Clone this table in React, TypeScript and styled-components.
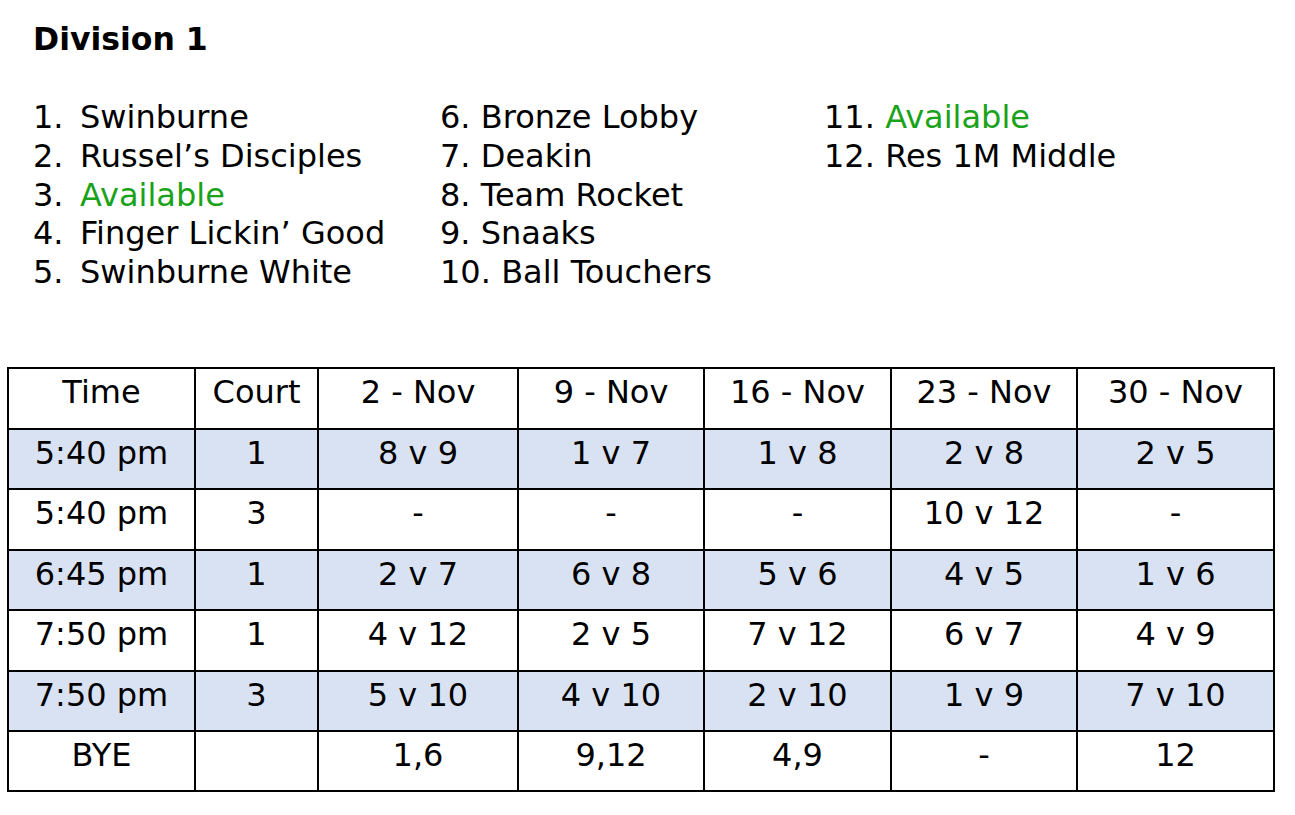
import styled, { createGlobalStyle } from "styled-components"

const GlobalStyle = createGlobalStyle`
    body {
        margin: 0;
        background: #ffffff;
        font-family: "DejaVu Sans", Verdana, sans-serif;
        color: #000000;
    }
`

const Page = styled.div`
    width: 1295px;
    height: 815px;
    padding: 21px 0 0 7px;
    box-sizing: border-box;
`

const Heading = styled.h1`
    margin: 0 0 0 26px;
    font-size: 31.5px;
    font-weight: bold;
    line-height: 37px;
`

const Teams = styled.div`
    display: grid;
    grid-template-columns: 407px 384px auto;
    margin: 40px 0 0 26px;
    font-size: 32px;
    line-height: 38.8px;
`

const TeamColumn = styled.ol`
    list-style: none;
    margin: 0;
    padding: 0;
`

const Team = styled.li<{ $hanging?: boolean }>`
    display: grid;
    grid-template-columns: ${p => (p.$hanging ? "47px auto" : "auto auto")};
    justify-content: start;
    white-space: nowrap;
    & > span:first-child {
        padding-right: ${p => (p.$hanging ? "0" : "0.32em")};
    }
`

const Name = styled.span<{ $open?: boolean }>`
    color: ${p => (p.$open ? "#1aa31a" : "#000000")};
`

const Fixtures = styled.table`
    margin-top: 75px;
    width: 1266px;
    border-collapse: collapse;
    table-layout: fixed;
`

const Row = styled.tr<{ $shaded?: boolean }>`
    background: ${p => (p.$shaded ? "#d9e2f3" : "#ffffff")};
`

const Cell = styled.td<{ $head?: boolean }>`
    border: 2px solid #000000;
    height: ${p => (p.$head ? "61px" : "60.4px")};
    padding: 3px 0 0;
    box-sizing: border-box;
    vertical-align: top;
    text-align: center;
    font-size: 32px;
    line-height: 40px;
    white-space: nowrap;
`

type TeamEntry = { n: number; name: string; open?: boolean }

const columns: TeamEntry[][] = [
    [
        { n: 1, name: "Swinburne" },
        { n: 2, name: "Russel’s Disciples" },
        { n: 3, name: "Available", open: true },
        { n: 4, name: "Finger Lickin’ Good" },
        { n: 5, name: "Swinburne White" },
    ],
    [
        { n: 6, name: "Bronze Lobby" },
        { n: 7, name: "Deakin" },
        { n: 8, name: "Team Rocket" },
        { n: 9, name: "Snaaks" },
        { n: 10, name: "Ball Touchers" },
    ],
    [
        { n: 11, name: "Available", open: true },
        { n: 12, name: "Res 1M Middle" },
    ],
]

const widths = [187, 123, 200, 186, 187, 186, 197]
const header = ["Time", "Court", "2 - Nov", "9 - Nov", "16 - Nov", "23 - Nov", "30 - Nov"]

const rows: string[][] = [
    ["5:40 pm", "1", "8 v 9", "1 v 7", "1 v 8", "2 v 8", "2 v 5"],
    ["5:40 pm", "3", "-", "-", "-", "10 v 12", "-"],
    ["6:45 pm", "1", "2 v 7", "6 v 8", "5 v 6", "4 v 5", "1 v 6"],
    ["7:50 pm", "1", "4 v 12", "2 v 5", "7 v 12", "6 v 7", "4 v 9"],
    ["7:50 pm", "3", "5 v 10", "4 v 10", "2 v 10", "1 v 9", "7 v 10"],
    ["BYE", "", "1,6", "9,12", "4,9", "-", "12"],
]

export default function App() {
    return (
        <Page>
            <GlobalStyle />
            <Heading>Division 1</Heading>
            <Teams>
                {columns.map((col, ci) => (
                    <TeamColumn key={ci}>
                        {col.map(t => (
                            <Team key={t.n} $hanging={ci === 0}>
                                <span>{t.n}.</span>
                                <Name $open={t.open}>{t.name}</Name>
                            </Team>
                        ))}
                    </TeamColumn>
                ))}
            </Teams>
            <Fixtures>
                <colgroup>
                    {widths.map((w, i) => (
                        <col key={i} style={{ width: w }} />
                    ))}
                </colgroup>
                <tbody>
                    <Row>
                        {header.map(h => (
                            <Cell key={h} $head>{h}</Cell>
                        ))}
                    </Row>
                    {rows.map((r, ri) => (
                        <Row key={ri} $shaded={ri % 2 === 0 && ri < 5}>
                            {r.map((c, ci) => (
                                <Cell key={ci}>{c}</Cell>
                            ))}
                        </Row>
                    ))}
                </tbody>
            </Fixtures>
        </Page>
    )
}
